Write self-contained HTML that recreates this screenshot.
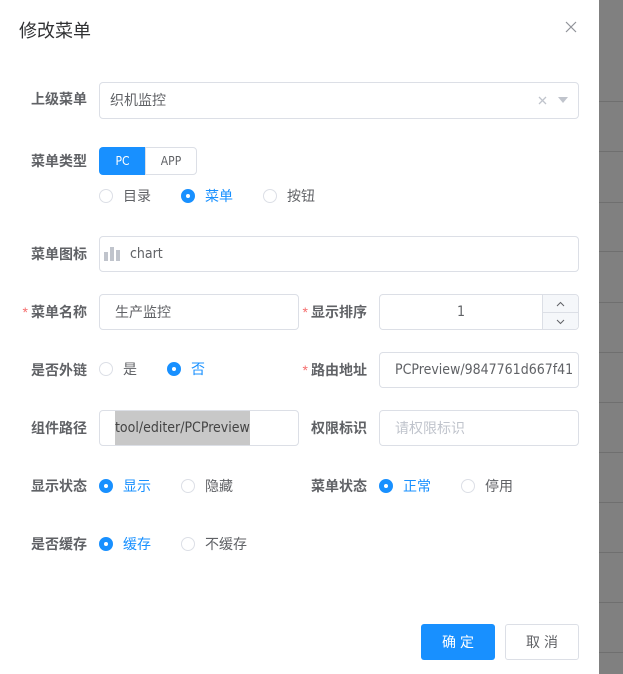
<!DOCTYPE html>
<html><head><meta charset="utf-8"><style>
*{box-sizing:border-box;margin:0;padding:0}
body{width:623px;height:674px;position:relative;overflow:hidden;background:#fff;font-family:"Liberation Sans","Noto Sans CJK SC",sans-serif;font-size:14px;color:#606266}
.strip{position:absolute;left:599px;top:0;width:24px;height:674px;background:#808080}
.strip i{position:absolute;left:0;width:24px;height:1px;background:#6f6f6f}
.a{position:absolute}
.t{position:absolute;line-height:18px;white-space:nowrap}
.lbl{position:absolute;font-weight:bold;color:#606266;text-align:right;width:80px;line-height:18px;font-size:14px}
.req:before{content:"*";color:#f56c6c;margin-right:3px;font-weight:normal}
.inp{position:absolute;border:1px solid #dcdfe6;border-radius:4px;background:#fff}
.r{position:absolute;width:14px;height:14px;border:1px solid #dcdfe6;border-radius:50%;background:#fff}
.r.on{border-color:#1890ff;background:#1890ff}
.r.on:after{content:"";position:absolute;left:4px;top:4px;width:4px;height:4px;border-radius:50%;background:#fff}
.blue{color:#1890ff}
.lat{font-family:"DejaVu Sans Condensed","Liberation Sans Narrow","Liberation Sans",sans-serif}
</style></head><body>
<div class="strip"><i style="top:101px"></i><i style="top:151px"></i><i style="top:202px"></i><i style="top:251px"></i><i style="top:302px"></i><i style="top:352px"></i><i style="top:402px"></i><i style="top:452px"></i><i style="top:502px"></i><i style="top:552px"></i><i style="top:602px"></i><i style="top:652px"></i></div>
<div class="t" style="left:19px;top:20px;font-size:18px;line-height:22px;color:#303133">修改菜单</div>
<svg class="a" style="left:565px;top:21px" width="12" height="12"><path d="M1 1L11 11M11 1L1 11" stroke="#909399" stroke-width="1.2"/></svg>

<div class="lbl" style="left:7px;top:90px">上级菜单</div>
<div class="inp" style="left:99px;top:82px;width:480px;height:37px"></div>
<div class="t" style="left:110px;top:91px;color:#606266;font-size:14px">织机监控</div>
<svg class="a" style="left:538px;top:96px" width="9" height="9"><path d="M1 1L8 8M8 1L1 8" stroke="#c0c4cc" stroke-width="1.3"/></svg>
<svg class="a" style="left:558px;top:97px" width="10" height="6"><path d="M0 0H10L5 6Z" fill="#c0c4cc"/></svg>

<div class="lbl" style="left:7px;top:152px">菜单类型</div>
<div class="a lat" style="left:99px;top:147px;width:47px;height:28px;background:#1890ff;border-radius:4px 0 0 4px;color:#fff;font-size:12px;line-height:28px;text-align:center">PC</div>
<div class="a lat" style="left:145px;top:147px;width:52px;height:28px;border:1px solid #dcdfe6;border-radius:0 4px 4px 0;font-size:12px;line-height:26px;text-align:center">APP</div>
<div class="r" style="left:99px;top:189px"></div><div class="t" style="left:123px;top:187px">目录</div>
<div class="r on" style="left:181px;top:189px"></div><div class="t blue" style="left:205px;top:187px">菜单</div>
<div class="r" style="left:263px;top:189px"></div><div class="t" style="left:287px;top:187px">按钮</div>

<div class="lbl" style="left:7px;top:245px">菜单图标</div>
<div class="inp" style="left:99px;top:236px;width:480px;height:36px"></div>
<svg class="a" style="left:104px;top:245px" width="16" height="16"><rect x="0" y="7" width="4" height="9" fill="#c0c4cc"/><rect x="6" y="2" width="4" height="14" fill="#c0c4cc"/><rect x="12" y="5" width="4" height="11" fill="#c0c4cc"/></svg>
<div class="t lat" style="left:130px;top:245px">chart</div>

<div class="lbl req" style="left:7px;top:303px">菜单名称</div>
<div class="inp" style="left:99px;top:294px;width:200px;height:36px"></div>
<div class="t" style="left:115px;top:303px">生产监控</div>
<div class="lbl req" style="left:287px;top:303px">显示排序</div>
<div class="inp" style="left:379px;top:294px;width:200px;height:36px"></div>
<div class="a" style="left:542px;top:295px;width:36px;height:34px;background:#f5f7fa;border-left:1px solid #dcdfe6;border-radius:0 4px 4px 0"><div style="position:absolute;left:0;top:17px;width:36px;height:1px;background:#dcdfe6"></div></div>
<svg class="a" style="left:556px;top:301px" width="9" height="24"><path d="M1 5L4.5 1.5L8 5M1 19L4.5 22.5L8 19" fill="none" stroke="#606266" stroke-width="1"/></svg>
<div class="t lat" style="left:457px;top:303px">1</div>

<div class="lbl" style="left:7px;top:361px">是否外链</div>
<div class="r" style="left:99px;top:362px"></div><div class="t" style="left:123px;top:360px">是</div>
<div class="r on" style="left:167px;top:362px"></div><div class="t blue" style="left:191px;top:360px">否</div>
<div class="lbl req" style="left:287px;top:361px">路由地址</div>
<div class="inp" style="left:379px;top:352px;width:200px;height:36px;overflow:hidden"><div class="t lat" style="left:15px;top:8px">PCPreview/9847761d667f41</div></div>

<div class="lbl" style="left:7px;top:419px">组件路径</div>
<div class="inp" style="left:99px;top:410px;width:200px;height:36px"></div>
<div class="a" style="left:115px;top:411px;width:135px;height:34px;background:#c8c8c8"></div>
<div class="t lat" style="left:115px;top:419px;color:#444;width:135px;overflow:hidden">tool/editer/PCPreview</div>
<div class="lbl" style="left:287px;top:419px">权限标识</div>
<div class="inp" style="left:379px;top:410px;width:200px;height:36px"></div>
<div class="t" style="left:395px;top:419px;color:#c0c4cc">请权限标识</div>

<div class="lbl" style="left:7px;top:477px">显示状态</div>
<div class="r on" style="left:99px;top:479px"></div><div class="t blue" style="left:123px;top:477px">显示</div>
<div class="r" style="left:181px;top:479px"></div><div class="t" style="left:205px;top:477px">隐藏</div>
<div class="lbl" style="left:287px;top:477px">菜单状态</div>
<div class="r on" style="left:379px;top:479px"></div><div class="t blue" style="left:403px;top:477px">正常</div>
<div class="r" style="left:461px;top:479px"></div><div class="t" style="left:485px;top:477px">停用</div>

<div class="lbl" style="left:7px;top:535px">是否缓存</div>
<div class="r on" style="left:99px;top:537px"></div><div class="t blue" style="left:123px;top:535px">缓存</div>
<div class="r" style="left:181px;top:537px"></div><div class="t" style="left:205px;top:535px">不缓存</div>

<div class="a" style="left:421px;top:624px;width:74px;height:36px;background:#1890ff;border-radius:3px;color:#fff;font-size:14px;line-height:36px;text-align:center;letter-spacing:4px;text-indent:4px">确定</div>
<div class="a" style="left:505px;top:624px;width:74px;height:36px;border:1px solid #dcdfe6;border-radius:3px;color:#606266;font-size:14px;line-height:34px;text-align:center;letter-spacing:4px;text-indent:4px">取消</div>
</body></html>
